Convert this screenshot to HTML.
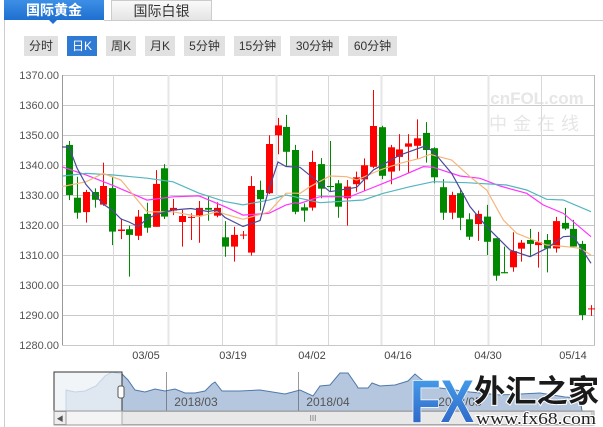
<!DOCTYPE html>
<html><head><meta charset="utf-8"><style>
body{margin:0;width:603px;height:427px;overflow:hidden;background:#fff;font-family:"Liberation Sans","Noto Sans CJK SC",sans-serif;position:relative}
.tab{position:absolute;top:0;height:20px;line-height:20px;text-align:center;font-size:14px}
.b{position:absolute;top:36px;height:20px;line-height:20px;background:#e1e1e1;color:#333;font-size:12px;text-align:center}
</style></head><body>
<div class="tab" style="left:4px;width:100px;background:linear-gradient(#3d8fe6,#1f6fd0);color:#fff;font-weight:bold">国际黄金</div>
<div style="position:absolute;left:49px;top:20px;width:0;height:0;border-left:4px solid transparent;border-right:4px solid transparent;border-top:4px solid #1f6fd0"></div>
<div class="tab" style="left:111px;width:99px;background:linear-gradient(#fafafa,#e4e4e4);color:#333;border:1px solid #ccc;border-bottom:none;height:19px">国际白银</div>
<div style="position:absolute;left:104px;right:0;top:20px;height:1px;background:#ccc"></div>
<div style="position:absolute;left:4px;top:20px;width:1px;height:407px;background:#ccc"></div>
<div class="b" style="left:24px;width:34px">分时</div>
<div class="b" style="left:67px;width:30px;background:#2f7bd4;color:#fff">日K</div>
<div class="b" style="left:106px;width:30px">周K</div>
<div class="b" style="left:145px;width:30px">月K</div>
<div class="b" style="left:184px;width:41px">5分钟</div>
<div class="b" style="left:234px;width:47px">15分钟</div>
<div class="b" style="left:290px;width:49px">30分钟</div>
<div class="b" style="left:348px;width:49px">60分钟</div>
<svg id="s" width="603" height="427" style="position:absolute;left:0;top:0" xmlns="http://www.w3.org/2000/svg"></svg>
<script>
var P=function(p){return 75+(1370-p)*3};
var h='';
h+='<defs><linearGradient id="g" x1="0" y1="0" x2="0" y2="1"><stop offset="0" stop-color="#4aa8f0"/><stop offset="1" stop-color="#2a5cc0"/></linearGradient></defs>';
h+='<text x="537" y="104" font-size="17" font-weight="bold" fill="#e6e6e6" text-anchor="middle" font-family="Liberation Sans">cnFOL.com</text>';
h+='<text x="537" y="130" font-size="18" fill="#e6e6e6" text-anchor="middle" letter-spacing="6" font-family="Noto Sans CJK SC">中金在线</text>';
for(var i=0;i<10;i++){var y=75+i*30;h+='<line x1="62" x2="595" y1="'+(y+.5)+'" y2="'+(y+.5)+'" stroke="#c8c8c8"/>';
h+='<text x="59" y="'+(y+4)+'" font-size="11" fill="#555" text-anchor="end">'+(1370-i*10)+'.00</text>';}
var vx=[113,168,222,276,328,381,434,488,541];
vx.forEach(function(x,i){h+='<line x1="'+(x+.5)+'" x2="'+(x+.5)+'" y1="75" y2="345" stroke="'+(i%2?'#e6e6e6':'#d8d8d8')+'" stroke-width="'+(i%2?2:1)+'"/>'});
h+='<line x1="62.5" x2="62.5" y1="75" y2="345" stroke="#999"/><line x1="594.5" x2="594.5" y1="75" y2="345" stroke="#bbb"/>';
[['03/05',146],['03/19',233],['04/02',312],['04/16',398],['04/30',488],['05/14',573]].forEach(function(a){h+='<text x="'+a[1]+'" y="359" font-size="11" fill="#444" text-anchor="middle">'+a[0]+'</text>'});
var C=[[69,1346.7,1330,1348,1328.3],[77,1329.1,1324.1,1336.1,1322.1],[86,1324.3,1331,1331.7,1320.8],[95,1331,1328.4,1332.2,1325.8],[103,1326.8,1333,1340.8,1326.4],[112,1332.3,1317.8,1336.1,1313.3],[121,1318,1318.5,1322.2,1315.3],[129,1318.6,1316.7,1319.8,1302.8],[138,1316.4,1322.8,1325,1315],[147,1323.7,1319.1,1327.4,1317.4],[156,1319.4,1333.7,1338.3,1319.4],[164,1338.9,1322.8,1340.3,1322],[173,1324.8,1325.7,1328.7,1323.3],[182,1321,1323,1325,1312.8],[191,1322.5,1322.7,1323.9,1315],[199,1323.2,1325.7,1328,1314.1],[208,1325.7,1325.1,1329.7,1321.4],[217,1323.1,1325.7,1327.6,1322.6],[225,1315.9,1312.8,1321.3,1309.4],[234,1312.8,1316.7,1319.4,1307.8],[243,1316.5,1316.8,1318,1315.3],[251,1310.8,1333,1336.3,1309.8],[260,1331.7,1328.6,1334.8,1324.8],[269,1330.6,1347,1349.9,1330.3],[278,1349.9,1353.2,1355.7,1343.6],[286,1352.7,1344.4,1356.7,1339.7],[295,1345,1324.4,1346.7,1323.6],
[304,1325.9,1324.8,1327.2,1321.1],[312,1325.8,1341,1344.8,1324.8],[321,1340.3,1332.1,1342.3,1328.9],[330,1333,1332.7,1348,1331],[338,1333.9,1326.1,1335,1322.4],[347,1328.9,1332.8,1335,1319.8],[356,1333.6,1335.9,1337.8,1331.1],[364,1335.2,1339.9,1342.2,1331.4],[373,1339.4,1353,1365,1338.9],[382,1352.6,1336.4,1353.1,1335.3],[391,1337.8,1345.9,1346.7,1333.6],[399,1342.7,1345.2,1350.3,1338.1],[408,1346.1,1347.2,1350.3,1337.2],[417,1346.4,1348.9,1355.2,1342],[426,1350.7,1345,1354.3,1340.8],[434,1345.6,1335.9,1345.9,1333.9],[443,1332.6,1324.1,1335.3,1321.7],[452,1324.1,1330,1331.1,1321.9],[460,1330.6,1322.4,1332.2,1318.3],[469,1321.9,1316.1,1323.9,1315],[478,1320.3,1323.7,1324.8,1314.7],[487,1322.8,1314.4,1326.7,1310],[496,1315.6,1303.1,1315.6,1301.4],[504,1304.3,1303.9,1312.8,1303.9],[513,1305.9,1311.3,1317.6,1304.4],[521,1312.1,1314.1,1315,1307.8],[530,1315,1313.7,1318.7,1309.7],[538,1313.3,1314.3,1317.7,1305.8],[547,1315,1312.2,1317,1304.2],[556,1312.2,1321.3,1322.7,1310.8],[565,1320.7,1318.8,1325.7,1318.3],[573,1318.7,1312.8,1321.7,1312.8],[582,1313.7,1290,1314.7,1288.3],[591,1292.2,1292.2,1293.3,1289.7]];
C.forEach(function(c){var x=c[0],up=c[2]>=c[1],col=up?'#f00':'#080';var t=P(Math.max(c[1],c[2])),b=P(Math.min(c[1],c[2]));
h+='<line x1="'+(x+.5)+'" x2="'+(x+.5)+'" y1="'+P(c[3])+'" y2="'+P(c[4])+'" stroke="'+col+'"/>';
h+='<rect x="'+(x-3)+'" y="'+t+'" width="7" height="'+Math.max(1,b-t)+'" fill="'+col+'"/>';});
function L(pts,col){h+='<polyline fill="none" stroke="'+col+'" stroke-width="1.2" points="'+pts.map(function(p){return p[0]+','+P(p[1])}).join(' ')+'"/>'}
function Z(a){return a.map(function(p){return [300+p[0]/3,1375-p[1]/9]})}
L([[62,1339.4],[86,1336.7],[112,1333.3],[147,1328.3],[173,1329.4],[199,1329.7],[225,1326.1],[243,1323.3],[269,1323.9],[286,1326.7],[295,1327.4]].concat(Z([[0,430],[60,410],[150,410],[200,390],[250,370],[300,350],[370,320],[400,322],[480,348],[540,355],[600,378],[680,400],[730,435],[790,460],[873,530]])),'#f3f');
L([[62,1336.3],[86,1337.2],[112,1336.7],[147,1335.6],[173,1334.4],[199,1330.6],[225,1327.8],[243,1326.7],[269,1328.3],[286,1330],[295,1329.4]].concat(Z([[0,415],[60,428],[190,420],[250,400],[330,380],[400,365],[500,368],[620,375],[680,390],[740,418],[790,420],[873,455]])),'#55b5bf');
L([[62,1332.8],[86,1334.4],[103,1337.2],[121,1335],[147,1324.4],[173,1324.4],[199,1322.8],[217,1324.4],[243,1321.9],[269,1324.4],[286,1330.6],[295,1330.6]].concat(Z([[0,400],[30,380],[90,348],[140,350],[170,360],[240,330],[300,310],[360,295],[390,283],[455,300],[510,350],[560,390],[610,480],[650,520],[700,540],[740,555],[800,560],[840,565],[873,585]])),'#f5b57a');
L([[62,1346],[69,1346],[77,1339],[86,1333.5],[103,1327],[112,1325],[121,1322],[129,1321],[138,1319.5],[147,1322],[156,1323.5],[173,1325],[191,1325.5],[208,1324.5],[217,1325],[225,1322.5],[243,1319.5],[260,1321.5],[269,1332],[278,1341],[286,1339.5]].concat(Z([[0,322],[90,395],[170,382],[220,330],[300,285],[375,258],[400,275],[455,340],[510,440],[560,500],[630,570],[690,590],[740,565],[790,530],[820,528],[873,610]])),'#4a4a9a');
// navigator
h+='<path d="M66,390 L75,392 L85,391 L96,386 L105,376 L112,372 L122,374 L128,380 L135,390 L145,392 L155,389 L165,391 L175,389 L185,393 L195,393 L205,391 L212,384 L215,382 L222,391 L240,391 L260,390 L285,394 L300,390 L313,396 L320,386 L330,385 L340,373 L348,373 L357,386 L358,388 L368,388 L372,383 L380,386 L395,385 L408,381 L415,374 L422,380 L440,388 L470,392 L500,395 L540,393 L565,397 L580,398 L582,411 L66,411Z" fill="#b5c7de" stroke="#4f78aa"/>';
h+='<rect x="54" y="372" width="68" height="39" fill="#eef1f5" fill-opacity="0.75" stroke="#333"/>';
h+='<line x1="166.5" x2="166.5" y1="372" y2="411" stroke="#555" stroke-width=".6"/><line x1="298.5" x2="298.5" y1="372" y2="411" stroke="#555" stroke-width=".6"/>';
h+='<rect x="118" y="386" width="6" height="12" rx="2" fill="#fff" stroke="#555"/>';
h+='<text x="196" y="406" font-size="12" fill="#555" text-anchor="middle">2018/03</text><text x="328" y="406" font-size="12" fill="#555" text-anchor="middle">2018/04</text><text x="460" y="406" font-size="12" fill="#555" text-anchor="middle">2018/05</text>';
h+='<rect x="54" y="411" width="540" height="14" fill="#f4f4f4" stroke="#999"/><rect x="122" y="411.5" width="470" height="13" fill="#e8e8e8" stroke="#aaa"/><rect x="54" y="411.5" width="12" height="13" fill="#eee" stroke="#999"/><text x="60" y="421" font-size="7" fill="#555" text-anchor="middle">◀</text><text x="313" y="421" font-size="8" fill="#777" text-anchor="middle">III</text>';
// logo
h+='<text x="410" y="422" font-size="60" font-weight="bold" fill="url(#g)" stroke="#fff" stroke-width="1.5" paint-order="stroke" font-family="Liberation Sans" textLength="64" lengthAdjust="spacingAndGlyphs">FX</text>';
h+='<text x="474" y="402" font-size="31" font-weight="bold" fill="#1a1a1a" stroke="#fff" stroke-width="2" paint-order="stroke" font-family="Noto Sans CJK SC" textLength="125" lengthAdjust="spacingAndGlyphs">外汇之家</text>';
h+='<text x="476" y="424" font-size="17" fill="#222" stroke="#fff" stroke-width="2" paint-order="stroke" font-family="Liberation Serif" textLength="120" lengthAdjust="spacingAndGlyphs">www.fx68.com</text>';
document.getElementById('s').innerHTML=h;
</script>
</body></html>
